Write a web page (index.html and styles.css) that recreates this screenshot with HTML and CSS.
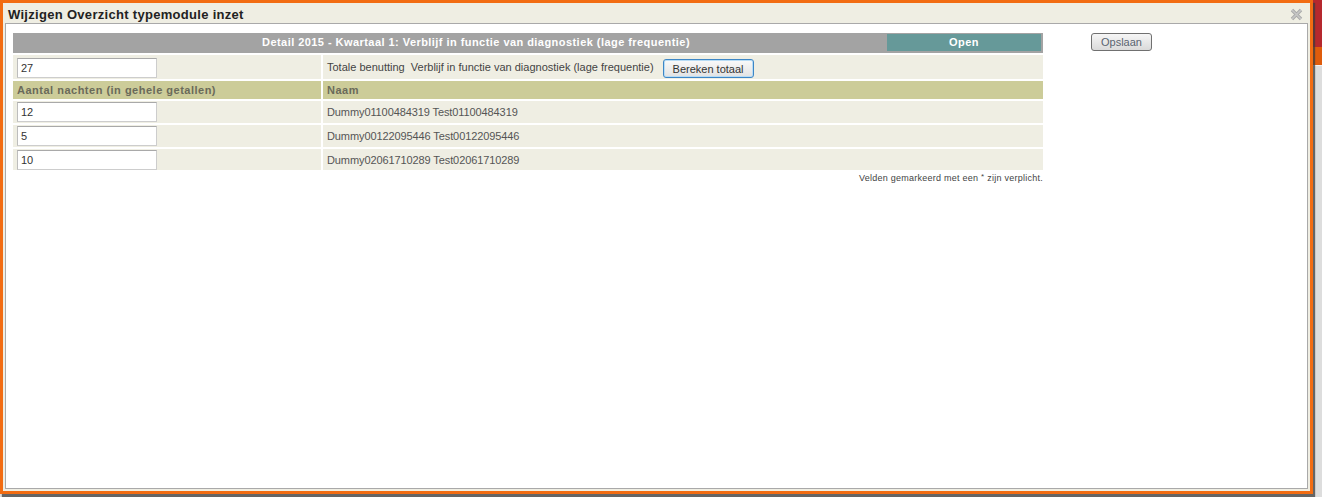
FILE: index.html
```html
<!DOCTYPE html>
<html lang="nl">
<head>
<meta charset="utf-8">
<title>Wijzigen Overzicht typemodule inzet</title>
<link rel="stylesheet" href="styles.css">
</head>
<body>
<div class="page">
  <div class="dialog">
    <div class="titlebar">
      <span class="title">Wijzigen Overzicht typemodule inzet</span>
      <span class="close" aria-label="Sluiten">
        <svg width="13" height="13" viewBox="0 0 13 13"><path d="M2 2 L11 11 M11 2 L2 11" stroke="#a9a9a9" stroke-width="3.4" stroke-linecap="butt" fill="none"/><path d="M2 2 L11 11 M11 2 L2 11" stroke="#c6c6c6" stroke-width="1.6" fill="none"/></svg>
      </span>
    </div>
    <div class="content">
      <div class="main">
        <div class="grid">
          <div class="head">
            <div class="head-title">Detail 2015 - Kwartaal 1: Verblijf in functie van diagnostiek (lage frequentie)</div>
            <div class="head-status">Open</div>
          </div>

          <div class="cell row-total"><input class="field" type="text" value="27"></div>
          <div class="cell row-total total-label">
            <span>Totale benutting&nbsp; Verblijf in functie van diagnostiek (lage frequentie)</span>
            <button class="btn-calc" type="button">Bereken totaal</button>
          </div>

          <div class="cell colhead">Aantal nachten (in gehele getallen)</div>
          <div class="cell colhead">Naam</div>

          <div class="cell row r1"><input class="field" type="text" value="12"></div>
          <div class="cell row r1 name">Dummy01100484319 Test01100484319</div>

          <div class="cell row r2"><input class="field" type="text" value="5"></div>
          <div class="cell row r2 name">Dummy00122095446 Test00122095446</div>

          <div class="cell row r3"><input class="field" type="text" value="10"></div>
          <div class="cell row r3 name">Dummy02061710289 Test02061710289</div>
        </div>
        <p class="note">Velden gemarkeerd met een <sup>*</sup> zijn verplicht.</p>
      </div>
      <div class="actions">
        <button class="btn-save" type="button">Opslaan</button>
      </div>
    </div>
  </div>
</div>
</body>
</html>
```

FILE: styles.css
```css
html, body {
  margin: 0;
  padding: 0;
}

body {
  width: 1322px;
  height: 497px;
  overflow: hidden;
  background: linear-gradient(to bottom, #b5282e 0, #b5282e 47px, #df5c0c 47px, #df5c0c 65px, #f2f2f2 65px, #f2f2f2 66px, #dddddd 66px);
  font-family: Tahoma, "Liberation Sans", Arial, sans-serif;
  font-size: 11px;
  color: #444;
}

.page {
  display: flex;
  align-items: flex-start;
}

.dialog {
  width: 1313px;
  height: 494px;
  box-sizing: border-box;
  border: 3px solid #f26c12;
  background: #efeee3;
  box-shadow: 2px 3px 1px rgba(60, 60, 60, 0.75);
  padding: 0 2px 2px 2px;
  display: flex;
  flex-direction: column;
}

.titlebar {
  height: 20px;
  display: flex;
  align-items: center;
  justify-content: space-between;
  padding: 0 3px 0 3px;
}

.title {
  font-family: Tahoma, "Liberation Sans", Arial, sans-serif;
  font-weight: bold;
  font-size: 13px;
  color: #222;
  letter-spacing: 0.3px;
  padding-top: 2px;
}

.close {
  display: flex;
  width: 13px;
  height: 13px;
  margin-right: 2px;
  margin-top: 2px;
}

.content {
  flex: 1;
  background: #fff;
  border: 1px solid #a9a9a9;
  display: flex;
  align-items: flex-start;
  padding: 9px 0 0 7px;
}

.main {
  width: 1030px;
}

.grid {
  display: grid;
  grid-template-columns: 308px 720px;
  grid-template-rows: 20px 24px 18px 22px 22px 21px;
  gap: 2px;
}

.head {
  grid-column: 1 / -1;
  background: #a3a3a3;
  display: flex;
  padding: 1px 2px 2px 0;
}

.head-title {
  flex: 1;
  text-align: center;
  padding-left: 52px;
  color: #fff;
  font-weight: bold;
  letter-spacing: 0.45px;
  line-height: 17px;
}

.head-status {
  width: 154px;
  background: #669999;
  color: #fff;
  font-weight: bold;
  letter-spacing: 0.45px;
  text-align: center;
  line-height: 17px;
}

.cell {
  background: #efeee3;
  display: flex;
  align-items: center;
  padding-left: 4px;
  color: #555;
}

.row-total {
  align-items: flex-start;
  padding-top: 3px;
}

.total-label {
  align-items: flex-start;
  color: #444;
}

.total-label span {
  margin-top: 3px;
}

.colhead {
  background: #cccc99;
  font-weight: bold;
  letter-spacing: 0.5px;
  color: #6a6a5a;
}

.row {
  align-items: flex-start;
  padding-top: 1px;
}

.name {
  align-items: center;
  padding-top: 0;
  letter-spacing: -0.1px;
}

.field {
  width: 140px;
  height: 20px;
  box-sizing: border-box;
  margin: 0;
  border: 1px solid #cdcdcd;
  border-top-color: #a9a9a9;
  border-left-color: #bdbdbd;
  padding: 0 3px;
  font-family: Tahoma, "Liberation Sans", Arial, sans-serif;
  font-size: 11px;
  color: #333;
  background: #fff;
}

.btn-calc {
  margin-left: 9px;
  margin-top: 1px;
  width: 91px;
  height: 19px;
  box-sizing: border-box;
  border: 1px solid #3d86c6;
  border-radius: 3px;
  box-shadow: inset 0 0 0 1px #b8dcf5;
  background: linear-gradient(to bottom, #fafafa, #e2e2e2);
  font-family: Tahoma, "Liberation Sans", Arial, sans-serif;
  font-size: 11px;
  color: #333;
  padding: 0;
}

.note {
  margin: 3px 0 0 0;
  text-align: right;
  font-size: 9px;
  letter-spacing: 0.25px;
  color: #444;
}

.note sup {
  font-size: 8px;
  vertical-align: 2px;
  line-height: 0;
}

.actions {
  margin-left: 48px;
}

.btn-save {
  width: 61px;
  height: 18px;
  box-sizing: border-box;
  border: 1px solid #707070;
  border-radius: 3px;
  background: linear-gradient(to bottom, #f6f6f6, #dadada);
  font-family: Tahoma, "Liberation Sans", Arial, sans-serif;
  font-size: 11px;
  color: #5a6470;
  padding: 0;
}
```
